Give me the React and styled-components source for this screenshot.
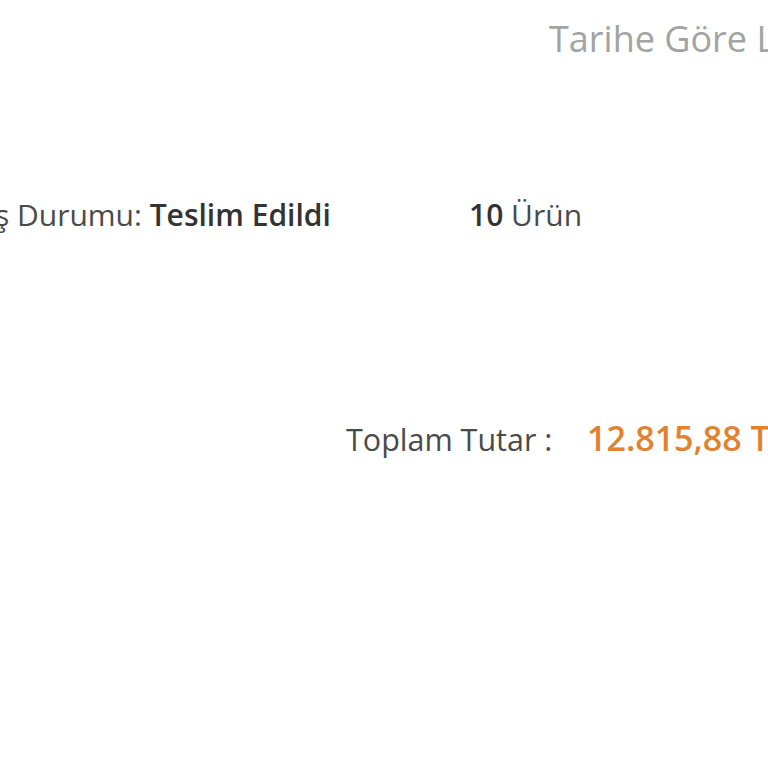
import React from "react";
import styled, { createGlobalStyle } from "styled-components";

const GlobalStyle = createGlobalStyle`
  html, body {
    margin: 0;
    padding: 0;
    background: #ffffff;
  }
  body {
    font-family: "Open Sans", "Liberation Sans", sans-serif;
  }
`;

const Page = styled.div`
  width: 768px;
  height: 768px;
  overflow: hidden;
  background: #ffffff;
  display: flex;
  flex-direction: column;
`;

const SortBar = styled.div`
  display: flex;
  padding: 16px 0 0 549px;
  white-space: nowrap;
  font-size: 36px;
  color: #a3a3a3;
  line-height: 1.3;
`;

const OrderRow = styled.div`
  display: flex;
  align-items: baseline;
  margin-top: 132px;
  white-space: nowrap;
  font-size: 30px;
  color: #4a4a4a;
  line-height: 1.3;
`;

const Status = styled.div`
  flex-shrink: 0;
  margin-left: -84px;
  width: 553px;
  & > b {
    font-weight: 600;
    color: #333333;
  }
`;

const Count = styled.div`
  flex-shrink: 0;
  & > b {
    font-weight: 600;
    color: #333333;
  }
`;

const TotalRow = styled.div`
  display: flex;
  align-items: baseline;
  margin-top: 182px;
  padding-left: 346px;
  white-space: nowrap;
  line-height: 1.3;
`;

const TotalLabel = styled.span`
  flex-shrink: 0;
  font-size: 30.5px;
  color: #4a4a4a;
  width: 241px;
`;

const TotalValue = styled.span`
  flex-shrink: 0;
  font-size: 34px;
  font-weight: 600;
  color: #e3812f;
`;

export default function App() {
  return (
    <Page>
      <GlobalStyle />
      <SortBar>Tarihe Göre Listele</SortBar>
      <OrderRow>
        <Status>
          Sipariş Durumu: <b>Teslim Edildi</b>
        </Status>
        <Count>
          <b>10</b> Ürün
        </Count>
      </OrderRow>
      <TotalRow>
        <TotalLabel>Toplam Tutar :</TotalLabel>
        <TotalValue>12.815,88 TL</TotalValue>
      </TotalRow>
    </Page>
  );
}
